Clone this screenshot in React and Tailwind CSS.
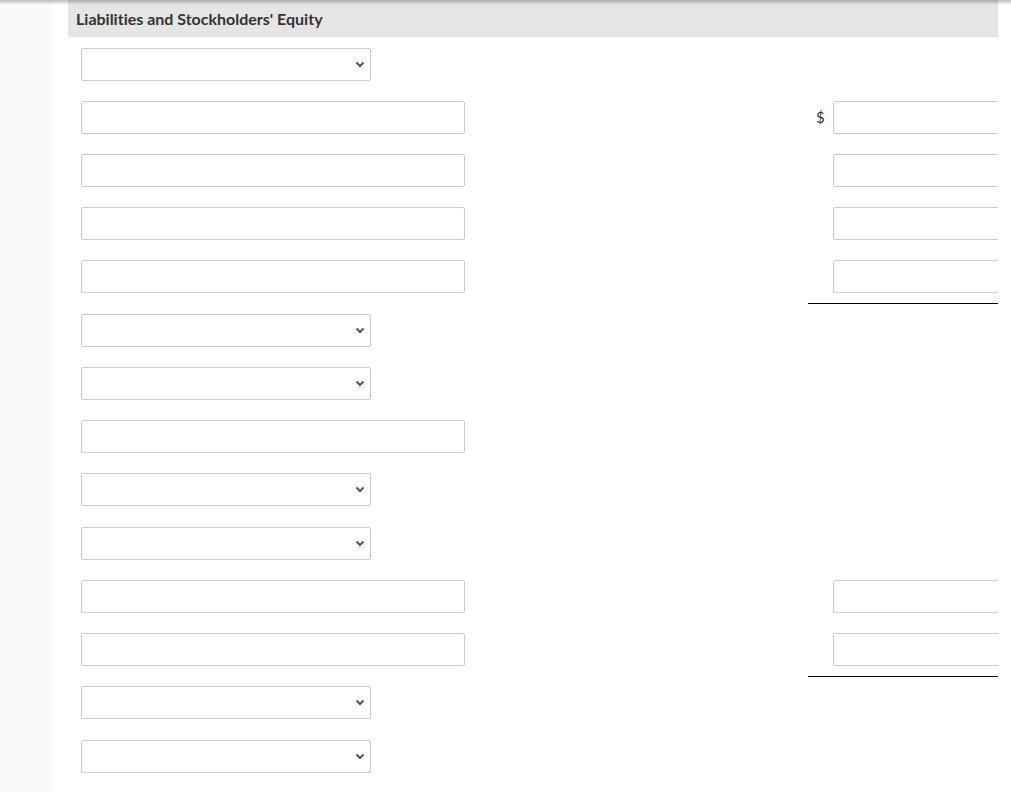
import React from 'react'

const ROWS = [
  { kind: 'select' },
  { kind: 'input', right: 'dollar' },
  { kind: 'input', right: 'plain' },
  { kind: 'input', right: 'plain' },
  { kind: 'input', right: 'total' },
  { kind: 'select', nudge: true },
  { kind: 'select' },
  { kind: 'input' },
  { kind: 'select' },
  { kind: 'select', nudge: true },
  { kind: 'input', right: 'plain' },
  { kind: 'input', right: 'total' },
  { kind: 'select' },
  { kind: 'select', nudge: true },
]

function Chevron() {
  return (
    <svg width="10" height="7" viewBox="0 0 10 7" className="absolute right-[6px] top-[13px] pointer-events-none">
      <path d="M1.5 1.5 L5 5 L8.5 1.5" fill="none" stroke="#555" strokeWidth="2" />
    </svg>
  )
}

function SelectBox() {
  return (
    <div className="relative w-[290px] h-[33px]">
      <select className="appearance-none w-full h-full bg-white border border-[#cccccc] rounded-[2px] outline-none" />
      <Chevron />
    </div>
  )
}

function TextBox({ className }) {
  return <input type="text" className={`h-[33px] bg-white border border-[#cccccc] rounded-[2px] outline-none ${className}`} />
}

function RightCell({ type }) {
  if (!type) return null
  return (
    <div className="ml-auto w-[190px] shrink-0 flex flex-col">
      <div className="flex items-center h-[33px]">
        <span className="w-[25px] shrink-0 pl-[8px] text-[15px] text-[#333]">{type === 'dollar' ? '$' : ''}</span>
        <TextBox className="w-[180px] shrink-0" />
      </div>
      {type === 'total' && <div className="mt-[10px] -mb-[11px] h-px bg-black" />}
    </div>
  )
}

export default function App() {
  return (
    <div className="relative flex min-h-screen bg-white" style={{ fontFamily: 'Lato, "Open Sans", sans-serif' }}>
      <div className="absolute inset-x-0 top-0 h-[5px] bg-gradient-to-b from-black/25 to-transparent pointer-events-none z-10" />
      <div className="w-[53px] shrink-0 bg-[#fafafa]" />
      <div className="pl-[15px]">
        <div className="w-[930px] overflow-hidden pb-10">
          <div className="h-[37px] bg-[#e5e5e5] pl-[8px] flex items-center">
            <h2 className="text-[16px] font-bold text-[#333] [font-variant-ligatures:none]">Liabilities and Stockholders' Equity</h2>
          </div>
          <div className="pl-[13px] pt-[11px] flex flex-col gap-[20px]">
            {ROWS.map((r, i) => (
              <div key={i} className={`flex items-start ${r.nudge ? 'mt-px' : ''}`}>
                {r.kind === 'select' ? <SelectBox /> : <TextBox className="w-[384px]" />}
                <RightCell type={r.right} />
              </div>
            ))}
          </div>
        </div>
      </div>
    </div>
  )
}
